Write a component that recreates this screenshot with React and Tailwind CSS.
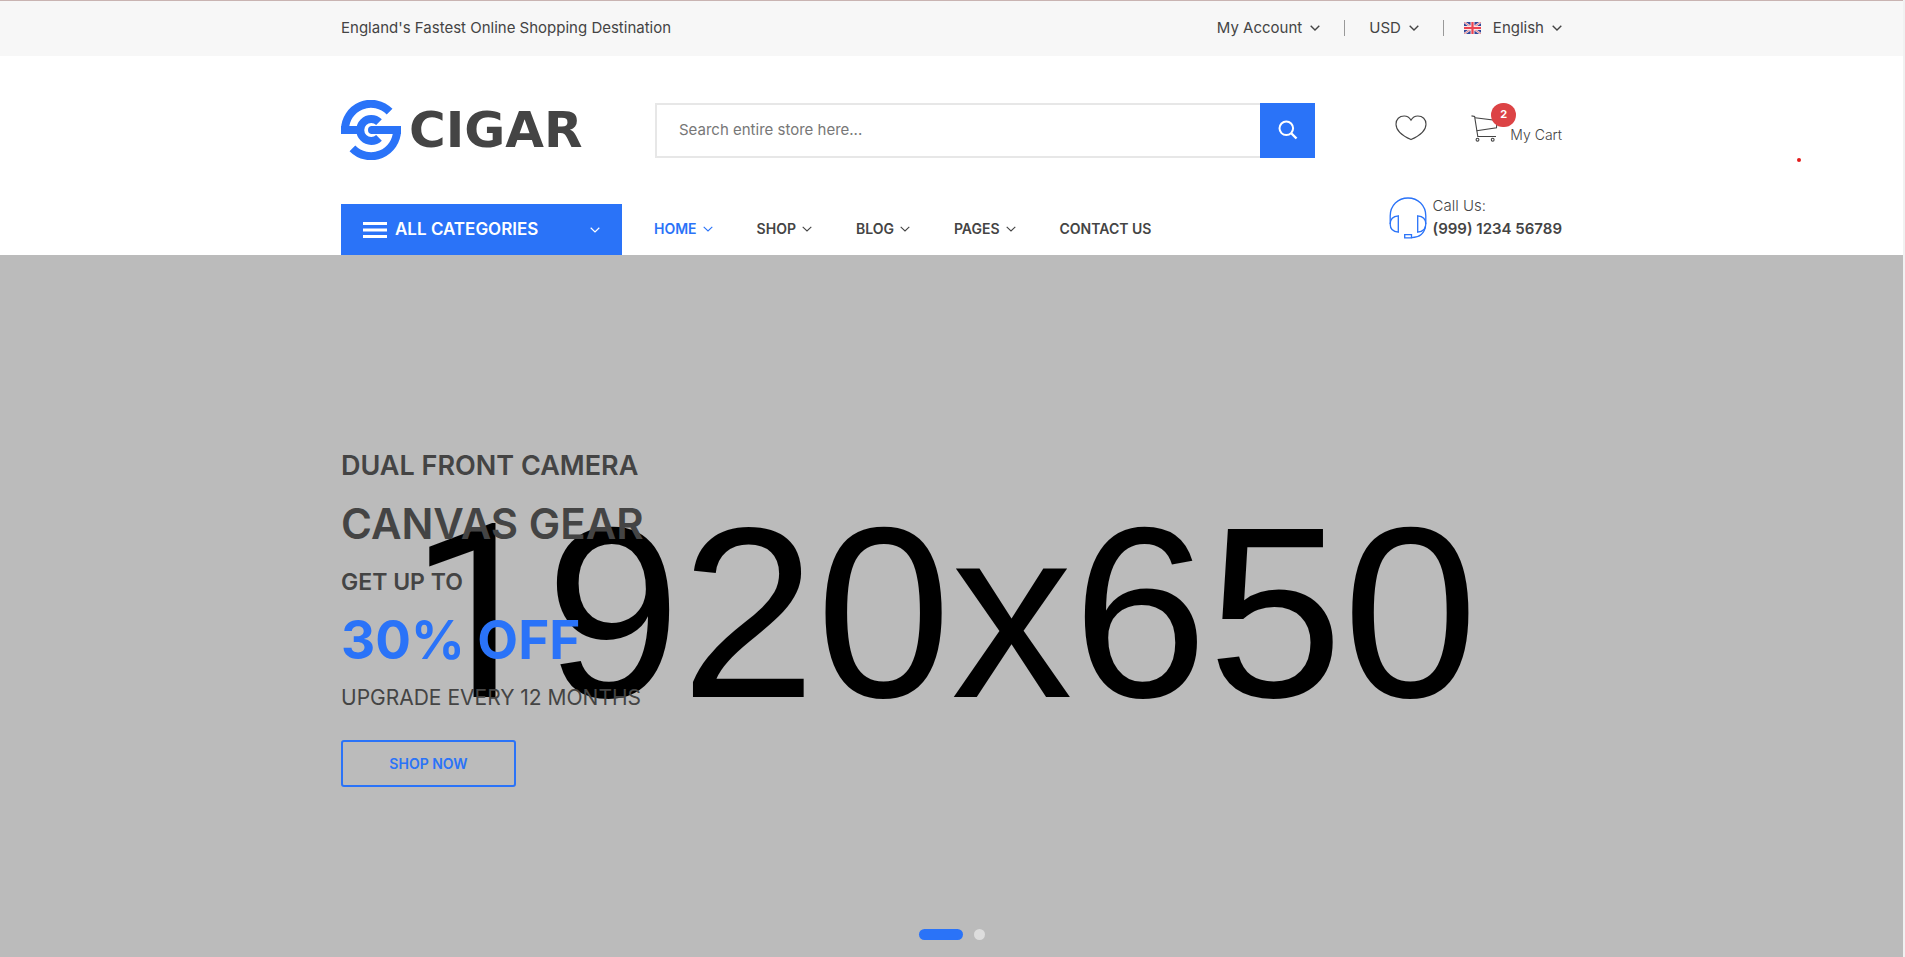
import React from "react";

function Chevron({ className = "", strokeWidth = 1.4 }) {
  return (
    <svg className={className} width="10" height="6" viewBox="0 0 10 6" fill="none" stroke="currentColor" strokeWidth={strokeWidth} aria-hidden="true">
      <path d="M0.7 0.8 5 5 9.3 0.8" />
    </svg>
  );
}

function LogoMark() {
  return (
    <svg className="h-15 w-15 shrink-0" viewBox="0 0 60 60" fill="none" stroke="#2a73f8" strokeWidth="8" aria-hidden="true">
      <path d="M4 34v-4A26 26 0 0 1 48.6 11.6" />
      <path d="M56 26v4A26 26 0 0 1 11.4 48.4" />
      <path d="M38 22.2A11 11 0 1 0 38 37.8" />
      <path d="M0 30h18" />
      <path d="M30 30h30" />
      <circle cx="31" cy="30" r="4" fill="#2a73f8" stroke="none" />
    </svg>
  );
}

function Flag() {
  return (
    <svg width="17" height="12" viewBox="0 0 17 12" aria-hidden="true">
      <rect width="17" height="12" fill="#2f4699" />
      <path d="M0 0 17 12M17 0 0 12" stroke="#f3dfe3" strokeWidth="2.2" />
      <path d="M0 0 17 12M17 0 0 12" stroke="#e0707a" strokeWidth="0.8" />
      <path d="M8.5 0v12M0 6h17" stroke="#fbe3e6" strokeWidth="4" />
      <path d="M8.5 0v12M0 6h17" stroke="#ec4450" strokeWidth="2.2" />
    </svg>
  );
}

function HeartIcon() {
  return (
    <svg width="32" height="26" viewBox="0 0 32 26" fill="none" stroke="#444" strokeWidth="1.1" aria-hidden="true">
      <path d="M16 5.2C14.300 2.200 11.800 1 9.200 1 4.300 1 1 4.300 1 9.200 1 16 8 21 16 24.600 24 21 31 16 31 9.200 31 4.300 27.700 1 22.800 1 20.200 1 17.700 2.200 16 5.200Z" />
    </svg>
  );
}

function CartIcon() {
  return (
    <svg width="27" height="27" viewBox="0 0 27 27" fill="none" stroke="#444" strokeWidth="1.1" aria-hidden="true">
      <path d="M0.500 0.900 3.600 1.500 6.800 21.500H25" />
      <path d="M4 2.800 26 5.500 25.500 12.800 5.600 15.800" />
      <circle cx="6.500" cy="24.700" r="1.400" />
      <circle cx="21.700" cy="24.700" r="1.400" />
    </svg>
  );
}

function HeadsetIcon() {
  return (
    <svg width="38" height="42" viewBox="0 0 38 42" fill="none" stroke="#2a73f8" strokeWidth="1.3" aria-hidden="true">
      <path d="M1.200 27V19C1.200 8.500 9 1 19 1s17.800 7.500 17.800 18v8" />
      <path d="M9.300 18.800v16.400C4 34.800 1.200 31.500 1.200 27S4 19.200 9.300 18.800Z" />
      <path d="M28.700 18.800v16.400c5.300-.4 8.100-3.700 8.100-8.200s-2.800-7.800-8.100-8.200Z" />
      <path d="M36.500 29C35.500 36 30.500 40.500 22.500 40.700" />
      <path d="M15.700 37.600h6.800v3.200h-6.800Z" />
    </svg>
  );
}

function TopBar() {
  return (
    <div className="border-t border-[#c9b4b2] bg-[#f7f7f7]">
      <div className="mx-auto flex h-[55px] max-w-[1221px] items-center justify-between pb-[2px] text-[15px] leading-6">
        <p>England's Fastest Online Shopping Destination</p>
        <div className="flex items-center">
          <button type="button" className="flex items-center gap-2">
            My Account <Chevron />
          </button>
          <span className="mx-6 h-4 w-px bg-[#999]" />
          <button type="button" className="flex items-center gap-2">
            USD <Chevron />
          </button>
          <span className="ml-6 mr-5 h-4 w-px bg-[#999]" />
          <button type="button" className="flex items-center gap-2">
            <Flag /> <span className="ml-1">English</span> <Chevron />
          </button>
        </div>
      </div>
    </div>
  );
}

function Header() {
  return (
    <header className="mx-auto w-full max-w-[1221px]">
      <div className="flex h-[148px] items-center">
        <a href="#home" className="flex w-[314px] shrink-0 items-center gap-2">
          <LogoMark />
          <span className="font-['DejaVu_Sans',sans-serif] text-[50px] font-bold leading-none text-[#444]">CIGAR</span>
        </a>
        <form className="flex h-[55px] flex-1" role="search">
          <input
            type="text"
            aria-label="Search entire store"
            placeholder="Search entire store here..."
            className="min-w-0 flex-1 border-2 border-r-0 border-[#e7e7e7] px-[22px] text-[15px] outline-none placeholder:text-[#777]"
          />
          <button type="button" aria-label="Search" className="flex w-[55px] items-center justify-center bg-[#2a73f8] text-white">
            <svg width="20" height="20" viewBox="0 0 20 20" fill="none" stroke="currentColor" strokeWidth="2" aria-hidden="true">
              <circle cx="8.300" cy="8.300" r="6.800" />
              <path d="m13 13 5.500 5.500" strokeWidth="2.400" />
            </svg>
          </button>
        </form>
        <div className="flex w-[247px] items-center justify-end pb-1">
          <a href="#wishlist" aria-label="Wishlist" className="mr-11">
            <HeartIcon />
          </a>
          <a href="#cart" className="relative flex items-end gap-3 font-light">
            <CartIcon />
            <span className="text-sm leading-[14px]">My Cart</span>
            <span className="absolute -top-3 left-5 flex h-6 w-[25px] items-center justify-center rounded-full bg-[#dc4345] text-[11px] font-bold text-white">2</span>
          </a>
        </div>
      </div>
      <div className="flex h-[51px] items-center">
        <button type="button" className="flex h-full w-[281px] shrink-0 items-center gap-2 bg-[#2a73f8] px-[22px] text-[17px] font-semibold text-white">
          <svg width="24" height="16" viewBox="0 0 24 16" fill="currentColor" aria-hidden="true">
            <path d="M0 0h24v3H0zM0 6.500h24v3H0zM0 13h24v3H0z" />
          </svg>
          ALL CATEGORIES
          <Chevron className="ml-auto" strokeWidth={1.2} />
        </button>
        <nav className="ml-8 flex flex-1 items-center gap-11 pb-[2px] text-sm font-semibold">
          <a href="#home" className="flex items-center gap-1.5 text-[#2a73f8]">HOME <Chevron strokeWidth={1.1} /></a>
          <a href="#shop" className="flex items-center gap-1.5">SHOP <Chevron strokeWidth={1.1} /></a>
          <a href="#blog" className="flex items-center gap-1.5">BLOG <Chevron strokeWidth={1.1} /></a>
          <a href="#pages" className="flex items-center gap-1.5">PAGES <Chevron strokeWidth={1.1} /></a>
          <a href="#contact">CONTACT US</a>
        </nav>
        <div className="mb-6 flex items-center gap-1.5">
          <HeadsetIcon />
          <p className="pb-[2px] text-[15px] leading-[23px]">
            <span className="block font-light">Call Us:</span>
            <span className="block font-semibold">(999) 1234 56789</span>
          </p>
        </div>
      </div>
    </header>
  );
}

function Hero() {
  return (
    <section className="relative flex flex-1 flex-col bg-[#bbb]">
      <div className="absolute inset-x-0 top-0 flex h-[716px] items-center justify-center overflow-hidden pr-4 font-['Liberation_Sans',Arial,sans-serif] text-[243px] leading-none text-black" aria-hidden="true">
        <p>
          <span className="font-[Roboto,sans-serif] leading-none">1</span>920x650
        </p>
      </div>
      <div className="relative mx-auto w-full max-w-[1221px] flex-1 pt-[182px]">
        <p className="text-[27px] font-semibold leading-[58px]">DUAL FRONT CAMERA</p>
        <h1 className="text-[42px] font-semibold leading-[58px]">CANVAS GEAR</h1>
        <p className="text-[23px] font-semibold leading-[58px]">GET UP TO</p>
        <p className="text-[53px] font-bold leading-[58px] text-[#2a73f8]">30% OFF</p>
        <p className="text-[21px] leading-[58px]">UPGRADE EVERY 12 MONTHS</p>
        <a href="#shop" className="mt-[13px] flex h-[47px] w-[175px] items-center justify-center rounded-[3px] border-2 border-[#2a73f8] text-sm font-semibold text-[#2a73f8]">
          SHOP NOW
        </a>
      </div>
      <div className="relative flex justify-center gap-[11px] pb-[17px]">
        <button type="button" aria-label="Slide 1" className="h-[11px] w-11 rounded-full bg-[#2a73f8]" />
        <button type="button" aria-label="Slide 2" className="h-[11px] w-[11px] rounded-full bg-[#ddd]" />
      </div>
    </section>
  );
}

export default function App() {
  return (
    <div className="relative flex min-h-screen flex-col border-r-2 border-[#f1f1f1] bg-white font-[Inter,sans-serif] text-[#444]">
      <TopBar />
      <Header />
      <Hero />
      <span className="absolute right-[102px] top-[158px] h-1 w-1 rounded-full bg-[#e31b1b]" />
    </div>
  );
}
